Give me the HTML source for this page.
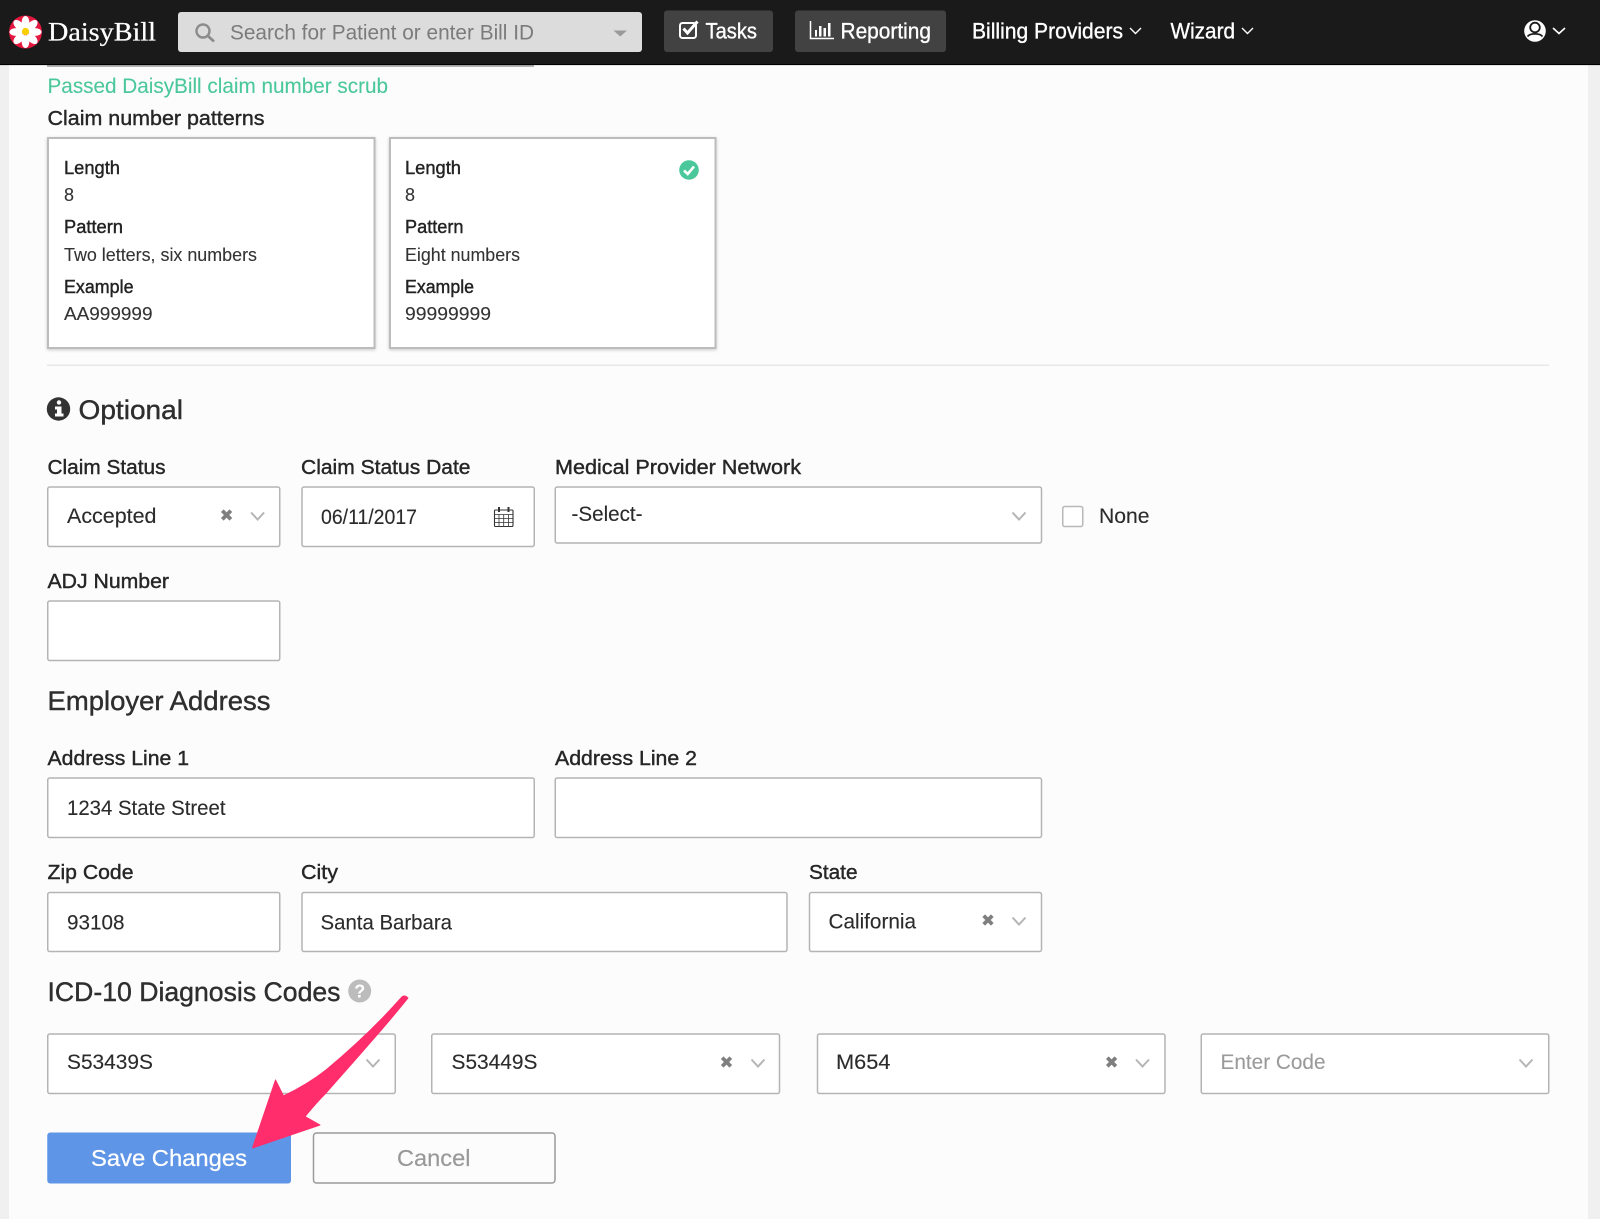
<!DOCTYPE html>
<html><head><meta charset="utf-8"><title>DaisyBill</title>
<style>
html,body{margin:0;padding:0;width:1600px;height:1219px;overflow:hidden;background:#fcfcfc}
svg{display:block;font-family:"Liberation Sans",sans-serif}
.lb{font-size:20.5px;fill:#262626;stroke:#262626;stroke-width:.4}
.c{font-size:18px;fill:#333;stroke:#333;stroke-width:.1}
.cb{font-size:18px;fill:#222;stroke:#222;stroke-width:.4}
.v{font-size:21px;fill:#2b2b2b;stroke:#2b2b2b;stroke-width:.12}
.h{font-size:27px;fill:#2e2e2e;stroke:#2e2e2e;stroke-width:.4}
.n{font-size:22px;fill:#fff;stroke:#fff;stroke-width:.35}
.box{fill:#fff;stroke:#b4b4b4;stroke-width:1.5}
.chev{fill:none;stroke:#b5b5b5;stroke-width:2}
.xx{stroke:#7f7f7f;stroke-width:3.8;fill:none}
</style></head><body>
<svg width="1600" height="1219" viewBox="0 0 1600 1219" xmlns="http://www.w3.org/2000/svg">
<defs>
<filter id="sh" x="-5%" y="-5%" width="110%" height="110%"><feDropShadow dx="0" dy="1" stdDeviation="1.5" flood-color="#000" flood-opacity=".2"/></filter>
<path id="ch" class="chev" d="M-6.5 -3.5 L0 3.5 L6.5 -3.5"/>
<path id="x" class="xx" d="M-4.3 -4.3 L4.3 4.3 M4.3 -4.3 L-4.3 4.3"/>
</defs>
<rect width="1600" height="1219" fill="#fcfcfc"/>
<rect x="0" y="0" width="9" height="1219" fill="#f0f0f0"/>
<rect x="1588" y="0" width="12" height="1219" fill="#f0f0f0"/>

<rect x="47" y="65" width="487" height="2" fill="#b4b4b4"/>
<rect width="1600" height="64" fill="#1a1a1a"/>
<rect y="64" width="1600" height="1" fill="#000"/>
<rect y="65" width="1600" height="1" fill="#000" opacity=".1"/>

<!-- logo -->
<circle cx="25.500" cy="32" r="16.500" fill="#e5173f"/>
<g fill="#fff">
<ellipse cx="25.500" cy="22.500" rx="3.900" ry="6.500"/>
<ellipse cx="25.500" cy="22.500" rx="3.900" ry="6.500" transform="rotate(45 25.500 32)"/>
<ellipse cx="25.500" cy="22.500" rx="3.900" ry="6.500" transform="rotate(90 25.500 32)"/>
<ellipse cx="25.500" cy="22.500" rx="3.900" ry="6.500" transform="rotate(135 25.500 32)"/>
<ellipse cx="25.500" cy="22.500" rx="3.900" ry="6.500" transform="rotate(180 25.500 32)"/>
<ellipse cx="25.500" cy="22.500" rx="3.900" ry="6.500" transform="rotate(225 25.500 32)"/>
<ellipse cx="25.500" cy="22.500" rx="3.900" ry="6.500" transform="rotate(270 25.500 32)"/>
<ellipse cx="25.500" cy="22.500" rx="3.900" ry="6.500" transform="rotate(315 25.500 32)"/>
</g>
<circle cx="25.500" cy="31.500" r="3.600" fill="#f9d100"/>
<text x="48" y="40.500" font-size="26" fill="#fff" stroke="#fff" stroke-width=".25" textLength="108" lengthAdjust="spacingAndGlyphs" style="font-family:'Liberation Serif',serif">DaisyBill</text>

<!-- search -->
<rect x="178" y="12" width="464" height="40" rx="3" fill="#dcdcdc"/>
<circle cx="203" cy="31" r="6.500" fill="none" stroke="#8c8c8c" stroke-width="2.400"/>
<path d="M208 36 L214 41.500" stroke="#8c8c8c" stroke-width="2.800" fill="none"/>
<text x="230" y="39.500" font-size="21.500" fill="#7b7b7b" textLength="304" lengthAdjust="spacingAndGlyphs">Search for Patient or enter Bill ID</text>
<path d="M613.500 30.500 H627 L620.250 36.500 Z" fill="#9a9a9a"/>

<!-- nav buttons -->
<rect x="664" y="10.500" width="109" height="41.500" rx="3" fill="#424242"/>
<rect x="795" y="10.500" width="151" height="41.500" rx="3" fill="#424242"/>
<rect x="680" y="23" width="16" height="15" rx="2.500" fill="none" stroke="#fff" stroke-width="2"/>
<path d="M683.500 28.500 L687.500 33 L697.500 21.500" fill="none" stroke="#fff" stroke-width="3"/>
<text x="705.500" y="38.500" class="n" textLength="51.500" lengthAdjust="spacingAndGlyphs">Tasks</text>
<path d="M810.500 21 V38.500 H834" fill="none" stroke="#fff" stroke-width="1.500"/>
<g fill="#fff"><rect x="815" y="30" width="2" height="6.500"/><rect x="819" y="26" width="2.500" height="10.500"/><rect x="823.500" y="28" width="2.500" height="8.500"/><rect x="828" y="23" width="2.500" height="13.500"/></g>
<text x="840.500" y="38.500" class="n" textLength="90.500" lengthAdjust="spacingAndGlyphs">Reporting</text>
<text x="972" y="38.500" class="n" textLength="151" lengthAdjust="spacingAndGlyphs">Billing Providers</text>
<path d="M1130 28 L1135.500 33.500 L1141 28" fill="none" stroke="#fff" stroke-width="1.400"/>
<text x="1170.500" y="38.500" class="n" textLength="64.500" lengthAdjust="spacingAndGlyphs">Wizard</text>
<path d="M1242 28 L1247.500 33.500 L1253 28" fill="none" stroke="#fff" stroke-width="1.400"/>
<circle cx="1535" cy="31" r="10.800" fill="#fff"/>
<circle cx="1535" cy="27.500" r="4.800" fill="none" stroke="#1a1a1a" stroke-width="1.800"/>
<path d="M1527.500 36.500 C1530 33 1540 33 1542.500 36.500" fill="none" stroke="#1a1a1a" stroke-width="1.800"/>
<path d="M1553 28 L1559 33.500 L1565 28" fill="none" stroke="#fff" stroke-width="1.600"/>

<!-- top text -->
<text x="47.500" y="93" font-size="21" fill="#4bc89b" stroke="#4bc89b" stroke-width=".1" textLength="340.500" lengthAdjust="spacingAndGlyphs">Passed DaisyBill claim number scrub</text>
<text x="47.500" y="125" class="lb" textLength="217" lengthAdjust="spacingAndGlyphs">Claim number patterns</text>

<!-- cards -->
<rect x="48" y="138" width="326.500" height="210" fill="#fff" stroke="#bcbcbc" stroke-width="2" filter="url(#sh)"/>
<rect x="390" y="138" width="325.500" height="210" fill="#fff" stroke="#bcbcbc" stroke-width="2" filter="url(#sh)"/>
<text x="64" y="174" class="cb" textLength="56" lengthAdjust="spacingAndGlyphs">Length</text>
<text x="64" y="201" class="c" textLength="10" lengthAdjust="spacingAndGlyphs">8</text>
<text x="64" y="233" class="cb" textLength="59" lengthAdjust="spacingAndGlyphs">Pattern</text>
<text x="64" y="261" class="c" textLength="193" lengthAdjust="spacingAndGlyphs">Two letters, six numbers</text>
<text x="64" y="293" class="cb" textLength="69.500" lengthAdjust="spacingAndGlyphs">Example</text>
<text x="64" y="320" class="c" textLength="88.500" lengthAdjust="spacingAndGlyphs">AA999999</text>
<text x="405" y="174" class="cb" textLength="56" lengthAdjust="spacingAndGlyphs">Length</text>
<text x="405" y="201" class="c" textLength="10" lengthAdjust="spacingAndGlyphs">8</text>
<text x="405" y="233" class="cb" textLength="58.500" lengthAdjust="spacingAndGlyphs">Pattern</text>
<text x="405" y="261" class="c" textLength="115" lengthAdjust="spacingAndGlyphs">Eight numbers</text>
<text x="405" y="293" class="cb" textLength="69" lengthAdjust="spacingAndGlyphs">Example</text>
<text x="405" y="320" class="c" textLength="86" lengthAdjust="spacingAndGlyphs">99999999</text>
<circle cx="689" cy="170" r="9.800" fill="#4bc89b"/>
<path d="M684 170.500 L687.700 174 L694 166.500" fill="none" stroke="#fff" stroke-width="2.600"/>

<rect x="47" y="364.500" width="1502" height="1.500" fill="#e8e8e8"/>

<!-- optional -->
<circle cx="58.500" cy="409" r="11.700" fill="#333"/>
<circle cx="59" cy="402.500" r="2.200" fill="#fff"/>
<path d="M55 406.500 H61.500 V413.500 H63.500 V416.500 H55 V413.500 H57 V409.500 H55 Z" fill="#fff"/>
<text x="78.500" y="419" font-size="27" fill="#2e2e2e" stroke="#2e2e2e" stroke-width=".4" textLength="104.500" lengthAdjust="spacingAndGlyphs">Optional</text>

<text x="47.500" y="474" class="lb" textLength="118" lengthAdjust="spacingAndGlyphs">Claim Status</text>
<text x="301" y="474" class="lb" textLength="169.500" lengthAdjust="spacingAndGlyphs">Claim Status Date</text>
<text x="555" y="474" class="lb" textLength="246" lengthAdjust="spacingAndGlyphs">Medical Provider Network</text>

<rect x="47.750" y="487" width="232" height="59.500" rx="2" class="box"/>
<text x="67" y="523" class="v" textLength="89.500" lengthAdjust="spacingAndGlyphs">Accepted</text>
<use href="#x" x="226.600" y="515"/>
<use href="#ch" x="257.600" y="516"/>

<rect x="302" y="487" width="232.250" height="59.500" rx="2" class="box"/>
<text x="321" y="524" class="v" textLength="96" lengthAdjust="spacingAndGlyphs">06/11/2017</text>
<g fill="none" stroke="#333" stroke-width="1.100">
<rect x="494.500" y="510" width="18.500" height="16.500" rx="1"/>
<path d="M494.500 514.500 H513 M494.500 518.500 H513 M494.500 522.500 H513 M499 514.500 V526.500 M503.700 514.500 V526.500 M508.500 514.500 V526.500" stroke-width=".8"/>
<path d="M499 507 V512 M508.500 507 V512" stroke-width="2"/>
</g>

<rect x="555.250" y="487" width="486.250" height="56" rx="2" class="box"/>
<text x="571.500" y="521" class="v" textLength="71" lengthAdjust="spacingAndGlyphs">-Select-</text>
<use href="#ch" x="1019" y="516"/>
<rect x="1062.750" y="506.500" width="20" height="20" rx="2" fill="#fff" stroke="#b8b8b8" stroke-width="1.500"/>
<text x="1099" y="523" class="v" textLength="50.500" lengthAdjust="spacingAndGlyphs">None</text>

<text x="47.500" y="588" class="lb" textLength="121.500" lengthAdjust="spacingAndGlyphs">ADJ Number</text>
<rect x="47.750" y="601" width="232" height="59.500" rx="2" class="box"/>

<text x="47.500" y="710" class="h" textLength="223" lengthAdjust="spacingAndGlyphs">Employer Address</text>

<text x="47.500" y="765" class="lb" textLength="141.500" lengthAdjust="spacingAndGlyphs">Address Line 1</text>
<text x="555" y="765" class="lb" textLength="142" lengthAdjust="spacingAndGlyphs">Address Line 2</text>
<rect x="47.750" y="778" width="486.500" height="59.500" rx="2" class="box"/>
<rect x="555.250" y="778" width="486.250" height="59.500" rx="2" class="box"/>
<text x="67" y="815" class="v" textLength="158.500" lengthAdjust="spacingAndGlyphs">1234 State Street</text>

<text x="47.500" y="879" class="lb" textLength="86" lengthAdjust="spacingAndGlyphs">Zip Code</text>
<text x="301" y="879" class="lb" textLength="37" lengthAdjust="spacingAndGlyphs">City</text>
<text x="809" y="879" class="lb" textLength="48.500" lengthAdjust="spacingAndGlyphs">State</text>
<rect x="47.750" y="892.500" width="232" height="59" rx="2" class="box"/>
<rect x="302" y="892.500" width="485" height="59" rx="2" class="box"/>
<rect x="809.500" y="892.500" width="232" height="59" rx="2" class="box"/>
<text x="67" y="929.500" class="v" textLength="57.500" lengthAdjust="spacingAndGlyphs">93108</text>
<text x="320.500" y="929.500" class="v" textLength="131.500" lengthAdjust="spacingAndGlyphs">Santa Barbara</text>
<text x="828.500" y="928.500" class="v" textLength="87.500" lengthAdjust="spacingAndGlyphs">California</text>
<use href="#x" x="988" y="920"/>
<use href="#ch" x="1019" y="921"/>

<text x="47.500" y="1001" class="h" textLength="293" lengthAdjust="spacingAndGlyphs">ICD-10 Diagnosis Codes</text>
<circle cx="359.700" cy="991" r="11.500" fill="#bcbcbc"/>
<text x="359.700" y="997.500" font-size="18" font-weight="bold" fill="#fff" text-anchor="middle">?</text>

<rect x="47.750" y="1034" width="347.500" height="59.500" rx="2" class="box"/>
<rect x="431.750" y="1034" width="347.750" height="59.500" rx="2" class="box"/>
<rect x="817.500" y="1034" width="347.500" height="59.500" rx="2" class="box"/>
<rect x="1201.250" y="1034" width="347.500" height="59.500" rx="2" class="box"/>
<text x="67" y="1069" class="v" textLength="86" lengthAdjust="spacingAndGlyphs">S53439S</text>
<use href="#ch" x="373" y="1063"/>
<text x="451.500" y="1069" class="v" textLength="86" lengthAdjust="spacingAndGlyphs">S53449S</text>
<use href="#x" x="726.500" y="1062"/>
<use href="#ch" x="758" y="1063"/>
<text x="836" y="1069" class="v" textLength="54.500" lengthAdjust="spacingAndGlyphs">M654</text>
<use href="#x" x="1111.600" y="1062"/>
<use href="#ch" x="1142.500" y="1063"/>
<text x="1220.500" y="1069" font-size="21" fill="#9a9a9a" stroke="#9a9a9a" stroke-width=".1" textLength="105" lengthAdjust="spacingAndGlyphs">Enter Code</text>
<use href="#ch" x="1526" y="1063"/>

<!-- buttons -->
<rect x="47.250" y="1132.500" width="243.750" height="51" rx="3" fill="#5f95e6"/>
<text x="91" y="1166" font-size="23" fill="#fff" stroke="#fff" stroke-width=".25" textLength="156" lengthAdjust="spacingAndGlyphs">Save Changes</text>
<rect x="313.500" y="1133" width="241.500" height="50" rx="3" fill="#fcfcfc" stroke="#9a9a9a" stroke-width="1.500"/>
<text x="397" y="1166" font-size="23" fill="#999" stroke="#999" stroke-width=".2" textLength="73.500" lengthAdjust="spacingAndGlyphs">Cancel</text>

<!-- arrow -->
<path d="M408 998 Q404 994 401 998 C378 1024 350 1050 326 1070 C312 1081 298 1089 283.500 1096 L275.500 1080 L252.500 1148 L320 1125 L305 1116.500 C312 1108 319 1100 326 1093 C345 1071 380 1033 408 998 Z" fill="#ff2d6b" stroke="#ff2d6b" stroke-width="1" stroke-linejoin="round"/>
</svg>
</body></html>
